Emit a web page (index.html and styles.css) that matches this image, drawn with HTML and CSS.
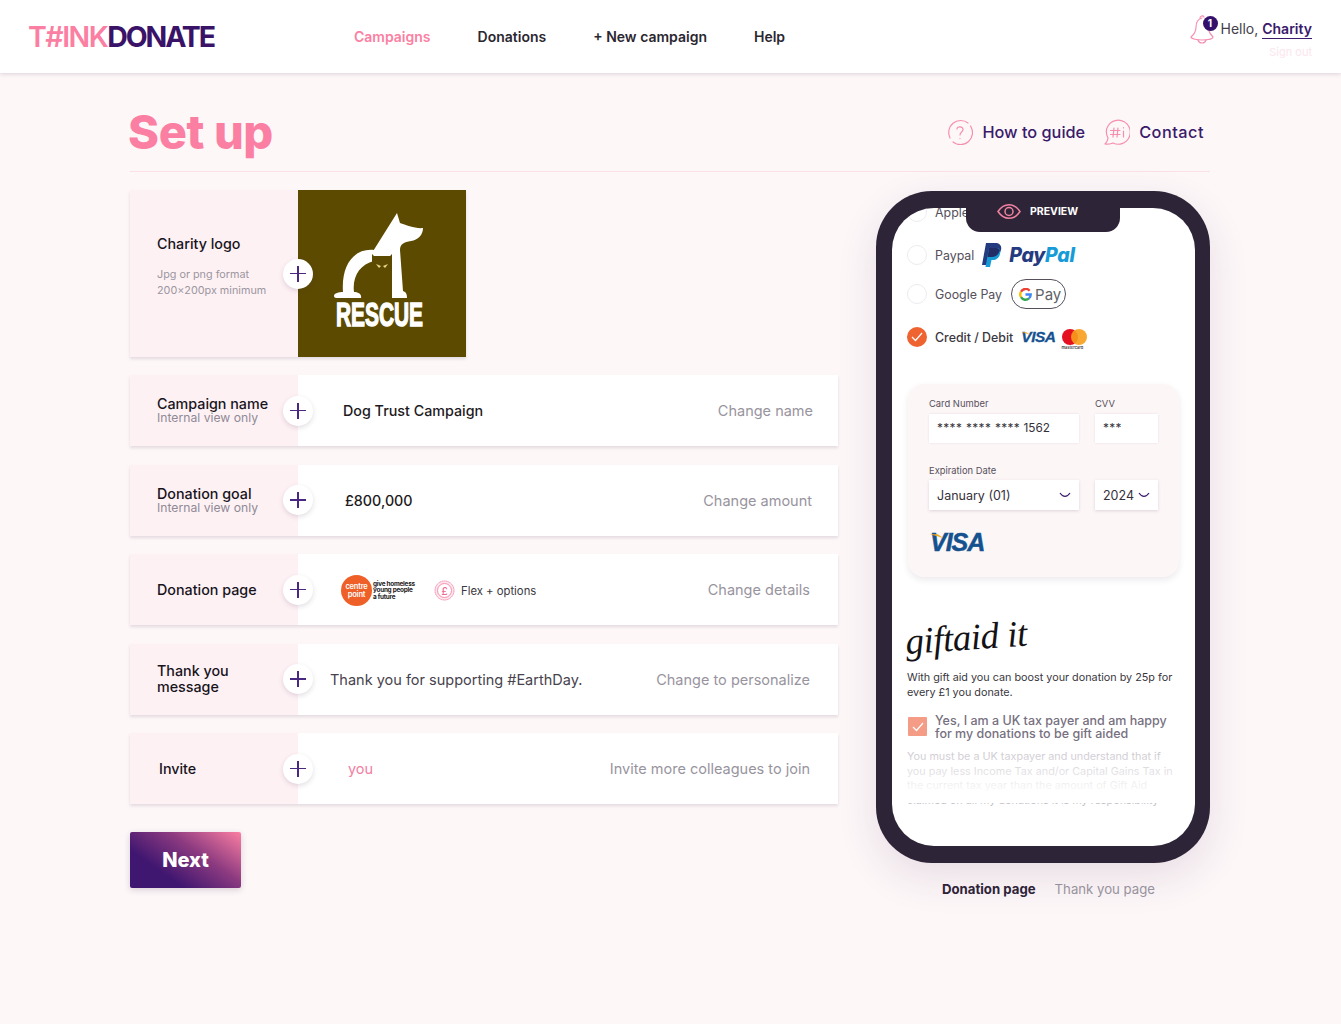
FILE: index.html
```html
<!DOCTYPE HTML>
<html>
<head>
<meta http-equiv="Content-Type" content="text/html; charset=utf-8">
<title>Think Donate - Set up</title>
<link rel="stylesheet" href="styles.css">
</head>
<body>

<header class="topbar">
  <a class="logo" href="#"><span class="logo-pink">T#INK</span>DONATE</a>
  <nav class="nav">
    <a class="nav-on" href="#">Campaigns</a>
    <a href="#">Donations</a>
    <a href="#">+ New campaign</a>
    <a href="#">Help</a>
  </nav>
  <div class="user">
    <div class="user-top">
      <div class="bell">
        <svg width="24" height="30" viewBox="0 0 24 30" fill="none" stroke="#f58fb0" stroke-width="1.2" stroke-linecap="round" stroke-linejoin="round"><path d="M12 4C8 5 6 9 6 13C6 18 4 20 1 23C1 25 8 26 12 26C17 26 23 25 23 23C21 21 19.500 19 19 17"/><path d="M10 4C10 2 13 1 14 3"/><path d="M8 26C9 30 15 30 16 26"/></svg>
        <span class="bell-badge">1</span>
      </div>
      <span class="hello">Hello, <a href="#">Charity</a></span>
    </div>
    <a class="signout" href="#">Sign out</a>
  </div>
</header>

<main class="page">
  <div class="title-row">
    <h1>Set up</h1>
    <div class="title-links">
      <a href="#">
        <svg width="26" height="26" viewBox="0 0 26 26" fill="none" stroke="#f58fb0" stroke-width="1.200" stroke-linecap="round"><path d="M3 19A12 12 0 0 1 21 4"/><path d="M23.500 7A12 12 0 0 1 6 23"/><path d="M10 10C10 7 16 7 16 10.500C16 13 13 13 13 16"/><path d="M13 19.500V19.600"/></svg>
        How to guide
      </a>
      <a class="link-contact" href="#">
        <svg width="26" height="26" viewBox="0 0 26 26" fill="none" stroke="#f58fb0" stroke-width="1.200" stroke-linecap="round" stroke-linejoin="round"><path d="M4 19C2 15 1.500 11 4 7A12 12 0 1 1 9 24C6 25 3 25.500 1 25C3 23 4 21 4 19Z"/><path d="M10 9L9 18M14 9L13 18M6.500 11.500H16M6.500 15.500H16M19.500 12V18M19.500 8.500V9"/></svg>
        Contact
      </a>
    </div>
  </div>

  <div class="columns">
    <section class="form">
      <div class="row row-logo">
        <div class="row-label">
          <b>Charity logo</b>
          <p class="hint">Jpg or png format<br>200x200px minimum</p>
        </div>
        <div class="logo-box">
          <svg width="168" height="168" viewBox="0 0 168 168">
            <path fill="#fff" d="M99 23L102 33C108 35 118 39 125 38C125 45 120 50 113 51C106 52 102 54 102 60L105 101C108 102 109 104 109 108H94V66H72Z"/>
            <path fill="#fff" d="M76 60C56 58 43 75 45 102C41 102 36 103 36 106C36 108 38 108 40 108H63C64 104 60 102 56 102C54 87 62 74 76 71Z"/>
            <path fill="#5c4a00" d="M74 64L79 69H89L94 64V86H74Z"/>
            <path fill="#e8d98a" d="M78 74L83 76L81 78ZM90 74L85 76L87 78Z"/>
            <text class="rescue" x="38" y="136" textLength="87" lengthAdjust="spacingAndGlyphs">RESCUE</text>
          </svg>
        </div>
        <span class="plus"></span>
      </div>

      <div class="row">
        <div class="row-label label-two"><b>Campaign name</b><small>Internal view only</small></div>
        <div class="row-body"><span class="value">Dog Trust Campaign</span><a class="change" href="#">Change name</a></div>
        <span class="plus"></span>
      </div>

      <div class="row">
        <div class="row-label label-two"><b>Donation goal</b><small>Internal view only</small></div>
        <div class="row-body body-goal"><span class="value">£800,000</span><a class="change" href="#">Change amount</a></div>
        <span class="plus"></span>
      </div>

      <div class="row">
        <div class="row-label"><b>Donation page</b></div>
        <div class="row-body body-page">
          <div class="page-info">
            <span class="cp-circle">centre<br>point</span>
            <span class="cp-tag">give homeless<br>young people<br>a future</span>
            <svg class="flex-icon" width="21" height="21" viewBox="0 0 21 21" fill="#fde6ec" stroke="#f58fb0"><circle cx="10.500" cy="10.500" r="9.500" stroke-dasharray="1.500 .4"/><circle cx="10.500" cy="10.500" r="7" fill="#fff"/><text class="pound" x="10.500" y="14.500">£</text></svg>
            <span class="flex-text">Flex + options</span>
          </div>
          <a class="change" href="#">Change details</a>
        </div>
        <span class="plus"></span>
      </div>

      <div class="row">
        <div class="row-label"><b>Thank you<br>message</b></div>
        <div class="row-body body-thanks"><span class="thanks">Thank you for supporting #EarthDay.</span><a class="change" href="#">Change to personalize</a></div>
        <span class="plus"></span>
      </div>

      <div class="row">
        <div class="row-label label-invite"><b>Invite</b></div>
        <div class="row-body body-invite"><span class="you">you</span><a class="change" href="#">Invite more colleagues to join</a></div>
        <span class="plus"></span>
      </div>

      <a class="next" href="#">Next</a>
    </section>

    <aside class="preview">
      <div class="phone">
        <div class="notch">
          <svg width="24" height="17" viewBox="0 0 24 17" fill="none" stroke="#f0839f" stroke-width="1.500"><path d="M1 8.500C7 -.5 17 -.5 23 8.500C17 17.500 7 17.500 1 8.500Z"/><circle cx="12" cy="8.500" r="4"/></svg>
          PREVIEW
        </div>
        <div class="screen">
          <div class="pay-row pay-apple"><span class="radio"></span>Apple Pay</div>
          <div class="pay-row pay-paypal">
            <span class="radio"></span>Paypal
            <svg class="pp-mark" width="20" height="24" viewBox="0 0 20 24"><path fill="#253b80" d="M4 0H13C18 0 20 3 19 7C18 11 14 14 10 14H7L5.500 22H0Z"/><path fill="#179bd7" d="M7 5H15C18 5 19 8 18 11C17 15 14 17 11 17H9.500L8 24H3.500Z"/><path fill="#222d65" d="M7 5H15C16 5 17 6 18 7C17 11 14 14 10 14H7L5.500 14Z"/></svg>
            <span class="pp-word">Pay<i>Pal</i></span>
          </div>
          <div class="pay-row pay-google">
            <span class="radio"></span>Google Pay
            <span class="gpay">
              <svg width="13" height="13" viewBox="0 0 13 13" fill="none" stroke-width="2.400"><path stroke="#ea4335" d="M10.600 2.700A5.200 5.200 0 0 0 2 3.800"/><path stroke="#fbbc04" d="M2 3.800A5.200 5.200 0 0 0 2 9.200"/><path stroke="#34a853" d="M2 9.200A5.200 5.200 0 0 0 10 10.400"/><path stroke="#4285f4" d="M10 10.400C11.200 9.400 11.700 8 11.700 6.500H6.500"/></svg>
              Pay
            </span>
          </div>
          <div class="pay-row pay-card">
            <span class="radio radio-on"><svg width="12" height="10" viewBox="0 0 12 10" fill="none" stroke="#fff" stroke-width="1.200"><path d="M1 5L4.500 8.500L11 1"/></svg></span>
            Credit / Debit
            <span class="visa visa-small">VISA</span>
            <span class="mc"><span class="mc-red"></span><span class="mc-orange"></span><em>mastercard</em></span>
          </div>

          <div class="card-panel">
            <div class="field-row">
              <div class="field field-wide"><label>Card Number</label><div class="input"><span class="stars">**** **** ****</span> 1562</div></div>
              <div class="field field-small"><label>CVV</label><div class="input"><span class="stars">***</span></div></div>
            </div>
            <div class="field-row field-row2">
              <div class="field field-wide"><label>Expiration Date</label>
                <div class="select">January (01)<svg width="12" height="6" viewBox="0 0 12 6" fill="none" stroke="#3a1a6b" stroke-width="1.200"><path d="M1 1C4 5.500 8 5.500 11 1"/></svg></div>
              </div>
              <div class="field field-small"><label>&nbsp;</label>
                <div class="select select-year">2024<svg width="12" height="6" viewBox="0 0 12 6" fill="none" stroke="#3a1a6b" stroke-width="1.200"><path d="M1 1C4 5.500 8 5.500 11 1"/></svg></div>
              </div>
            </div>
            <span class="visa visa-big">VISA</span>
          </div>

          <div class="giftaid">giftaid it</div>
          <p class="gift-text">With gift aid you can boost your donation by 25p for every £1 you donate.</p>
          <div class="gift-check">
            <span class="checkbox"><svg width="12" height="10" viewBox="0 0 12 10" fill="none" stroke="#fff" stroke-width="1.200"><path d="M1 5L4.500 8.500L11 1"/></svg></span>
            <span>Yes, I am a UK tax payer and am happy for my donations to be gift aided</span>
          </div>
          <p class="gift-small">You must be a UK taxpayer and understand that if you pay less Income Tax and/or Capital Gains Tax in the current tax year than the amount of Gift Aid claimed on all my donations it is my responsibility</p>
          <div class="screen-fade"></div>
        </div>
      </div>
      <div class="tabs"><a class="tab-on" href="#">Donation page</a><a href="#">Thank you page</a></div>
    </aside>
  </div>
</main>

</body>
</html>
```

FILE: styles.css
```css
* {box-sizing:border-box;}
html, body {margin:0; padding:0;}
body {background:#fdf7f8; font-family:"Inter","Noto Sans",sans-serif; color:#1d1a22; height:1024px; overflow:hidden;}
a {text-decoration:none; color:inherit;}

/* top bar */
.topbar {height:73px; background:#fff; box-shadow:0 1px 4px rgba(60,40,70,.18); display:flex; align-items:center; padding:0 29px 0 28px; position:relative;}
.logo {font-size:28.5px; font-weight:700; letter-spacing:-2.100px; color:#3a1268; width:187px; white-space:nowrap;}
.logo-pink {color:#fb7fa3; font-weight:600; letter-spacing:-1.500px;}
.nav {display:flex; gap:47px; margin-left:139px; font-size:14px; font-weight:600; color:#2b2730; margin-top:-1px;}
.nav-on {color:#fb7fa3;}
.user {margin-left:auto; display:flex; flex-direction:column; align-items:flex-end; margin-top:-1px;}
.user-top {display:flex; align-items:center; gap:6px; height:30px;}
.bell {position:relative; width:24px; height:30px;}
.bell-badge {position:absolute; left:13px; top:2px; width:15px; height:15px; border-radius:50%; background:#35106b; color:#fff; font-size:10px; font-weight:700; text-align:center; line-height:15px;}
.hello {font-size:14px; color:#45414b; margin-left:1px;}
.hello a {color:#3a1a6b; font-weight:600; border-bottom:1px solid #3a1a6b; padding-bottom:1px;}
.signout {font-size:11px; color:#fbe6ee; margin-top:1px;}

/* page */
.page {padding:0 131px 0 130px;}
.title-row {height:99px; display:flex; justify-content:space-between; align-items:center; border-bottom:1px solid #fbe0e7; padding:20px 6px 0 0;}
.title-row h1 {margin:0 0 2px -2px; font-size:47px; font-weight:800; color:#fb7fa3; letter-spacing:-.4px;}
.title-links {display:flex; gap:19px; font-size:16.300px; font-weight:500; color:#3a1a6b;}
.title-links a {display:flex; align-items:center; gap:9px;}
.title-links .link-contact {letter-spacing:.5px;}
.columns {display:flex; gap:38px; margin-top:18px;}

/* form rows */
.form {width:709px;}
.row {position:relative; display:flex; height:71px; margin-bottom:18.500px; box-shadow:0 2px 3px rgba(70,50,80,.14);}
.row-label {width:168px; background:#fef1f4; padding-left:27px; display:flex; flex-direction:column; justify-content:center;}
.row-label b {font-size:14.300px; font-weight:500; line-height:16px; color:#17141c;}
.row-label small {font-size:12.200px; line-height:11px; color:#8f8a96;}
.label-two {padding-bottom:2px;}
.label-invite {padding-left:29px;}
.row-body {flex:1; background:#fff; display:flex; align-items:center; justify-content:space-between; padding:0 25px 0 45px;}
.value {font-size:14.300px; font-weight:500;}
.change {font-size:14.500px; color:#98949e;}
.body-goal {padding:0 26px 0 47px;}
.body-page {padding:0 28px 0 43px;}
.body-thanks {padding:0 28px 0 32px;}
.body-invite {padding:0 28px 0 50px;}
.thanks {font-size:14.500px; color:#47434d;}
.you {font-size:14.500px; color:#f27ea2;}
.plus {position:absolute; left:153px; top:50%; margin-top:-15px; width:30px; height:30px; border-radius:50%; background:#fff; box-shadow:0 2px 5px rgba(70,50,80,.16);}
.plus:before, .plus:after {content:""; position:absolute; background:#4a2780;}
.plus:before {left:7px; top:14px; width:16px; height:1.500px;}
.plus:after {left:14.250px; top:7px; width:1.500px; height:16px;}

.row-logo {height:167px; margin-bottom:18px; width:336px;}
.row-logo .row-label {justify-content:flex-start; padding-top:46px;}
.hint {margin:15px 0 0; font-size:10.800px; line-height:16px; color:#9b96a0;}
.logo-box {width:168px; background:#5c4a00; overflow:hidden;}
.logo-box svg {display:block;}
.rescue {font-family:"Liberation Sans",sans-serif; font-size:33px; font-weight:700; fill:#fff; stroke:#fff; stroke-width:1.400px;}

.page-info {display:flex; align-items:center; margin-top:2px;}
.cp-circle {width:31px; height:31px; border-radius:50%; background:#ee6028; color:#fff; font-size:7.500px; font-weight:600; line-height:7.500px; text-align:center; padding-top:8px; letter-spacing:-.2px; flex:none;}
.cp-tag {font-size:6.400px; font-weight:700; line-height:6.500px; margin-left:1px; letter-spacing:-.25px; width:61px; white-space:nowrap;}
.pound {font-size:10px; fill:#f0688f; stroke:none; text-anchor:middle; font-weight:500;}
.flex-text {font-size:11.300px; margin-left:6px; color:#3b3740;}

.next {display:block; width:111px; height:56px; margin-top:27.500px; border-radius:2px; background:linear-gradient(215deg,#fb7fa3 0%,#8c3a80 38%,#3f1670 72%,#3f1670 100%); color:#fff; font-size:20px; font-weight:800; text-align:center; line-height:56px; box-shadow:0 2px 6px rgba(70,50,80,.2);}

/* phone */
.preview {width:334px;}
.phone {position:relative; width:334px; height:672px; margin-top:1px; background:#2e2438; border-radius:56px; padding:17px 15px 17px 16px; box-shadow:0 14px 40px rgba(70,40,90,.12);}
.notch {position:absolute; left:90px; top:0; width:154px; height:41px; background:#2e2438; border-radius:0 0 14px 14px; z-index:2; display:flex; align-items:center; gap:9px; padding:0 0 0 31px; color:#fff; font-size:10.500px; font-weight:700;}
.screen {position:relative; height:638px; background:#fff; border-radius:42px; padding:0 15px; overflow:hidden;}
.pay-row {display:flex; align-items:center; font-size:12.400px; color:#55505c; height:30px;}
.pay-apple {margin-top:-11px;}
.pay-paypal {margin-top:13px;}
.pay-google {margin-top:9px;}
.pay-card {margin-top:13px; color:#3b3740; font-weight:500;}
.radio {width:20px; height:20px; border-radius:50%; border:1.500px solid #eeeaf0; margin-right:8px; flex:none; display:flex; align-items:center; justify-content:center;}
.radio-on {background:#ee6330; border:0;}
.pp-mark {margin-left:8px;}
.pp-word {font-size:19.500px; font-weight:800; font-style:italic; color:#253b80; margin-left:7px; letter-spacing:-.3px;}
.pp-word i {color:#179bd7;}
.gpay {display:flex; align-items:center; gap:3px; height:30px; width:55px; border:1.500px solid #55505c; border-radius:15px; margin-left:9px; padding-left:7px; font-size:15px; color:#5f6368;}
.visa {position:relative; font-family:"Liberation Sans",sans-serif; font-weight:700; font-style:italic; color:#15518f; letter-spacing:-.5px;}
.visa:before {content:""; position:absolute; left:0; top:24%; width:26%; height:14%; background:#f2a71d; clip-path:polygon(0 0,55% 0,100% 100%,65% 60%);}
.visa-small {font-size:15.500px; margin-left:8px; -webkit-text-stroke:.3px #15518f;}
.mc {position:relative; width:26px; height:22px; margin:6px 0 0 6px;}
.mc-red, .mc-orange {position:absolute; top:0; width:16px; height:16px; border-radius:50%;}
.mc-red {left:0; background:#e5101f;}
.mc-orange {left:9px; background:#f79e1b; opacity:.9;}
.mc em {position:absolute; left:0; top:16px; font-size:4px; font-style:normal; line-height:5px; color:#222;}

.card-panel {margin:32px 0 0 1px; width:271px; height:193px; background:#fdf6f7; border-radius:16px; padding:14px 20px 0 21px; box-shadow:0 3px 6px rgba(70,50,80,.1);}
.field-row {display:flex; gap:16px;}
.field-row2 {margin-top:22px;}
.field-row2 label {margin-bottom:3px;}
.field label {display:block; font-size:9.400px; line-height:12px; color:#55505c; margin-bottom:4px;}
.field-row2 .field label {margin-bottom:3px;}
.field-wide {width:150px;}
.field-small {width:63px;}
.input {height:29px; background:#fff; font-size:11.800px; line-height:29px; padding-left:8px; color:#35313a; box-shadow:0 0 2px rgba(70,50,80,.12);}
.stars {letter-spacing:.4px;}
.select {height:30px; background:#fff; font-size:12.500px; padding:0 8px; color:#35313a; display:flex; align-items:center; justify-content:space-between; box-shadow:0 1px 3px rgba(70,50,80,.18);}
.visa-big {display:block; font-size:25px; margin-top:17px; line-height:30px; letter-spacing:-1px; -webkit-text-stroke:.5px #15518f; width:54px; margin-left:1px;}

.giftaid {font-family:"Liberation Serif",serif; font-style:italic; font-size:37px; line-height:44px; margin-top:43px; color:#141216; transform:rotate(-4deg); transform-origin:left bottom; letter-spacing:-.5px;}
.gift-text {margin:6px 0 0; font-size:10.800px; line-height:15px; color:#3b3740;}
.gift-check {display:flex; gap:8px; margin-top:14px; font-size:12.500px; line-height:13px; color:#77707f; font-weight:500;}
.checkbox {flex:none; width:19px; height:19px; margin:3px 0 0 1px; border-radius:1px; background:#f49c85; display:flex; align-items:center; justify-content:center;}
.gift-small {margin:10px 0 0; font-size:10.800px; line-height:14.500px; color:#c6c2ca;}
.screen-fade {position:absolute; left:0; right:0; top:537px; height:58px; background:linear-gradient(rgba(255,255,255,0),#fff 90%);}

.tabs {display:flex; justify-content:center; gap:19px; margin-top:18px; font-size:13.200px; color:#9a95a0; padding-left:11px;}
.tab-on {font-weight:700; color:#2e2438;}
```
